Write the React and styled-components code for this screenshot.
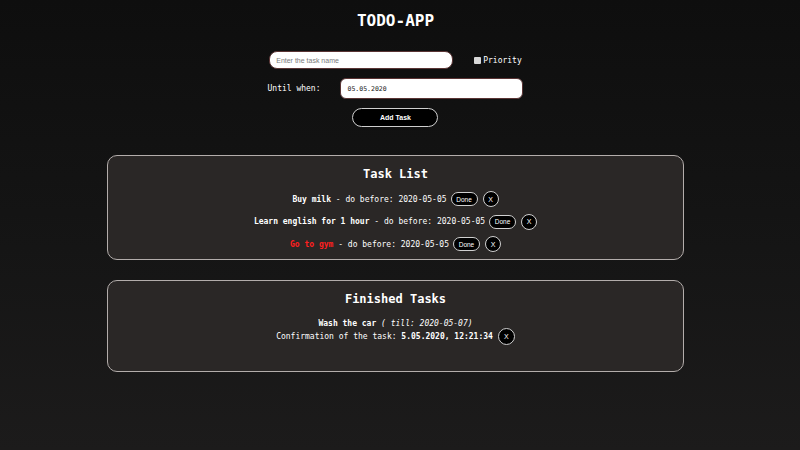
import React from "react";
import styled, { createGlobalStyle } from "styled-components";

const GlobalStyle = createGlobalStyle`
  html, body {
    margin: 0;
    padding: 0;
  }
  body {
    background: linear-gradient(180deg, #0e0e0e 0%, #151515 55%, #1c1b1b 100%);
    min-height: 100vh;
    color: #fff;
    font-family: "DejaVu Sans Mono", "Liberation Mono", monospace;
  }
`;

const Page = styled.div`
  min-height: 450px;
  padding-right: 9px;
  display: flex;
  flex-direction: column;
  align-items: center;
`;

const Title = styled.h1`
  margin: 10px 0 0;
  font-size: 16px;
  line-height: 22px;
  font-weight: bold;
  letter-spacing: 0;
`;

const Form = styled.form`
  display: flex;
  flex-direction: column;
  align-items: center;
  margin-top: 19px;
`;

const FormRow = styled.div`
  display: flex;
  align-items: center;
  gap: ${(p) => p.gap || 0}px;
  margin-bottom: ${(p) => p.mb || 0}px;
`;

const TextInput = styled.input`
  box-sizing: border-box;
  width: ${(p) => p.w}px;
  height: ${(p) => p.h}px;
  border: 1px solid #5a3434;
  border-radius: ${(p) => p.r}px;
  background: #fff;
  padding: 0 6px;
  outline: none;
  font-family: ${(p) =>
    p.mono ? '"DejaVu Sans Mono", monospace' : '"Liberation Sans", Arial, sans-serif'};
  font-size: ${(p) => (p.mono ? 6.5 : 7)}px;
  color: #222;
  &::placeholder {
    color: #7a7a7a;
  }
`;

const CheckLabel = styled.label`
  display: flex;
  align-items: center;
  gap: 2px;
  font-size: 8px;
  color: #fff;
`;

const Box = styled.span`
  display: inline-block;
  width: 7px;
  height: 7px;
  background: #d8d8d8;
  border-radius: 1px;
`;

const Label = styled.span`
  font-size: 8px;
  color: #fff;
`;

const AddButton = styled.button`
  width: 86px;
  height: 19px;
  border: 1px solid #cfcfcf;
  border-radius: 10px;
  background: #000;
  color: #fff;
  font-family: "Liberation Sans", Arial, sans-serif;
  font-size: 7px;
  font-weight: bold;
  padding: 0;
`;

const Card = styled.section`
  box-sizing: border-box;
  width: 577px;
  height: ${(p) => p.h}px;
  margin-top: ${(p) => p.mt}px;
  background: #2a2726;
  border: 1px solid #b3adab;
  border-radius: 10px;
  padding-top: 9px;
  display: flex;
  flex-direction: column;
  align-items: center;
`;

const CardTitle = styled.h2`
  margin: 0;
  font-size: 12px;
  line-height: 18px;
  font-weight: bold;
`;

const List = styled.div`
  margin-top: 5px;
  display: flex;
  flex-direction: column;
  align-items: center;
`;

const TaskRow = styled.div`
  height: 22.5px;
  display: flex;
  align-items: center;
  font-size: 8px;
  white-space: pre;
`;

const Name = styled.strong`
  color: ${(p) => (p.priority ? "#ff1f1f" : "#fff")};
  font-weight: bold;
`;

const Done = styled.button`
  margin-left: 4px;
  width: 27px;
  height: 14px;
  padding: 0;
  border: 1px solid #d0d0d0;
  border-radius: 8px;
  background: #000;
  color: #fff;
  font-family: "Liberation Sans", Arial, sans-serif;
  font-size: 6.5px;
`;

const XButton = styled.button`
  margin-left: ${(p) => p.ml}px;
  width: ${(p) => p.size}px;
  height: ${(p) => p.size}px;
  padding: 0;
  border: 1px solid #d0d0d0;
  border-radius: 50%;
  background: #000;
  color: #fff;
  font-family: "Liberation Sans", Arial, sans-serif;
  font-size: 7px;
  line-height: 1;
`;

const FinishedInfo = styled.div`
  margin-top: 10px;
  display: flex;
  flex-direction: column;
  align-items: center;
  font-size: 8px;
`;

const InfoLine = styled.div`
  display: flex;
  align-items: center;
  height: ${(p) => p.h}px;
  white-space: pre;
`;

const Till = styled.em`
  font-style: italic;
`;

const tasks = [
  { id: 1, name: "Buy milk", date: "2020-05-05" },
  { id: 2, name: "Learn english for 1 hour", date: "2020-05-05" },
  { id: 3, name: "Go to gym", date: "2020-05-05", priority: true },
];

export default function App() {
  return (
    <>
      <GlobalStyle />
      <Page>
        <Title>TODO-APP</Title>
        <Form onSubmit={(e) => e.preventDefault()}>
          <FormRow gap={21} mb={9}>
            <TextInput w={184} h={18} r={8} placeholder="Enter the task name" />
            <CheckLabel>
              <Box />
              Priority
            </CheckLabel>
          </FormRow>
          <FormRow gap={20} mb={9}>
            <Label>Until when:</Label>
            <TextInput w={183} h={21} r={6} mono defaultValue="05.05.2020" />
          </FormRow>
          <AddButton type="submit">Add Task</AddButton>
        </Form>

        <Card mt={28} h={105}>
          <CardTitle>Task List</CardTitle>
          <List>
            {tasks.map((t) => (
              <TaskRow key={t.id}>
                <Name priority={t.priority}>{t.name}</Name>
                {" - do before: " + t.date}
                <Done>Done</Done>
                <XButton ml={5} size={16}>X</XButton>
              </TaskRow>
            ))}
          </List>
        </Card>

        <Card mt={20} h={92}>
          <CardTitle>Finished Tasks</CardTitle>
          <FinishedInfo>
            <InfoLine h={10}>
              <strong>Wash the car</strong>
              <Till> ( till: 2020-05-07)</Till>
            </InfoLine>
            <InfoLine h={16}>
              {"Confirmation of the task: "}
              <strong>5.05.2020, 12:21:34</strong>
              <XButton ml={5} size={17}>X</XButton>
            </InfoLine>
          </FinishedInfo>
        </Card>
      </Page>
    </>
  );
}
